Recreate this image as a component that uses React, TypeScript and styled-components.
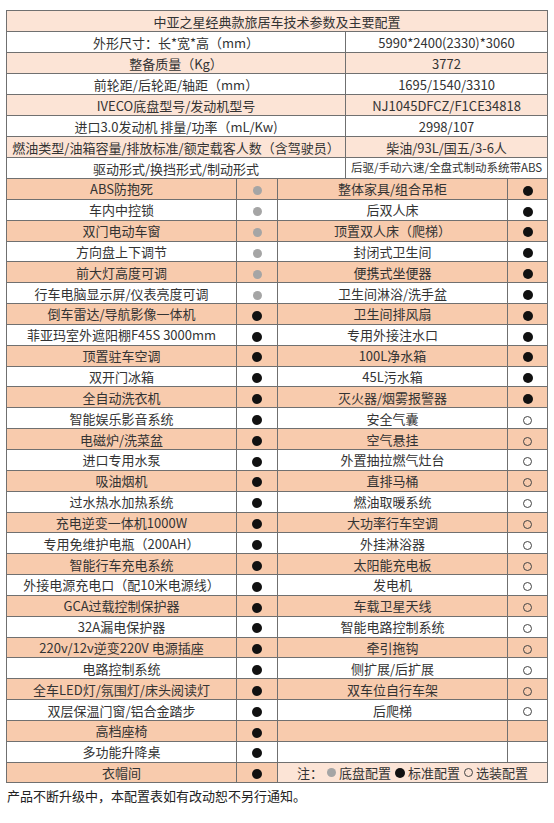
import styled, { createGlobalStyle } from "styled-components";

type Mark = "base" | "std" | "opt";
type Tone = "peach" | "salmon" | "white";

const GlobalStyle = createGlobalStyle`
  html, body {
    margin: 0;
    padding: 0;
    background: #fff;
  }
  body {
    font-family: "Noto Sans CJK SC", "Noto Sans", sans-serif;
    color: #333;
  }
`;

const Page = styled.div`
  width: 554px;
  height: 823px;
  box-sizing: border-box;
  padding: 10px 0 0 6px;
`;

const Sheet = styled.table`
  width: 541px;
  border-collapse: collapse;
  table-layout: fixed;
  border: 1px solid #555;
`;

const Row = styled.tr<{ $h: number }>`
  height: ${(p) => p.$h}px;
`;

const tones: Record<Tone, string> = {
  peach: "#fce4d6",
  salmon: "#f8cbad",
  white: "#ffffff",
};

const Cell = styled.td<{ $tone: Tone; $size?: number }>`
  padding: 0;
  border: 1px solid #707070;
  background: ${(p) => tones[p.$tone]};
  text-align: center;
  vertical-align: middle;
  font-size: ${(p) => p.$size ?? 13}px;
  line-height: 1;
  white-space: nowrap;
  overflow: hidden;
  color: #333;
`;

const Dot = styled.span<{ $mark: Mark }>`
  display: inline-block;
  box-sizing: border-box;
  width: ${(p) => (p.$mark === "std" ? 10 : 9)}px;
  height: ${(p) => (p.$mark === "std" ? 10 : 9)}px;
  border-radius: 50%;
  vertical-align: middle;
  background: ${(p) =>
    p.$mark === "base" ? "#a5a5a5" : p.$mark === "std" ? "#111" : "transparent"};
  border: ${(p) => (p.$mark === "opt" ? "1.3px solid #444" : "none")};
`;

const Legend = styled.span`
  display: inline-flex;
  align-items: center;
  gap: 2px;
  font-size: 13px;
  & > ${Dot} {
    margin: 0 1px 0 2px;
  }
`;

const Footnote = styled.p`
  margin: 6px 0 0 1px;
  font-size: 13px;
  line-height: 14px;
  color: #222;
`;

// label, value, row tone, optional smaller size for the value
const specs: [string, string, Tone, number?][] = [
  ["外形尺寸：长*宽*高（mm）", "5990*2400(2330)*3060", "white"],
  ["整备质量（Kg）", "3772", "peach"],
  ["前轮距/后轮距/轴距（mm）", "1695/1540/3310", "white"],
  ["IVECO底盘型号/发动机型号", "NJ1045DFCZ/F1CE34818", "peach"],
  ["进口3.0发动机 排量/功率（mL/Kw)", "2998/107", "white"],
  ["燃油类型/油箱容量/排放标准/额定载客人数（含驾驶员）", "柴油/93L/国五/3-6人", "peach"],
  ["驱动形式/换挡形式/制动形式", "后驱/手动六速/全盘式制动系统带ABS", "white", 11.5],
];

const leftItems: [string, Mark][] = [
  ["ABS防抱死", "base"],
  ["车内中控锁", "base"],
  ["双门电动车窗", "base"],
  ["方向盘上下调节", "base"],
  ["前大灯高度可调", "base"],
  ["行车电脑显示屏/仪表亮度可调", "base"],
  ["倒车雷达/导航影像一体机", "std"],
  ["菲亚玛室外遮阳棚F45S 3000mm", "std"],
  ["顶置驻车空调", "std"],
  ["双开门冰箱", "std"],
  ["全自动洗衣机", "std"],
  ["智能娱乐影音系统", "std"],
  ["电磁炉/洗菜盆", "std"],
  ["进口专用水泵", "std"],
  ["吸油烟机", "std"],
  ["过水热水加热系统", "std"],
  ["充电逆变一体机1000W", "std"],
  ["专用免维护电瓶（200AH）", "std"],
  ["智能行车充电系统", "std"],
  ["外接电源充电口（配10米电源线）", "std"],
  ["GCA过载控制保护器", "std"],
  ["32A漏电保护器", "std"],
  ["220v/12v逆变220V 电源插座", "std"],
  ["电路控制系统", "std"],
  ["全车LED灯/氛围灯/床头阅读灯", "std"],
  ["双层保温门窗/铝合金踏步", "std"],
  ["高档座椅", "std"],
  ["多功能升降桌", "std"],
  ["衣帽间", "std"],
];

const rightItems: ([string, Mark] | null)[] = [
  ["整体家具/组合吊柜", "std"],
  ["后双人床", "std"],
  ["顶置双人床（爬梯）", "std"],
  ["封闭式卫生间", "std"],
  ["便携式坐便器", "std"],
  ["卫生间淋浴/洗手盆", "std"],
  ["卫生间排风扇", "std"],
  ["专用外接注水口", "std"],
  ["100L净水箱", "std"],
  ["45L污水箱", "std"],
  ["灭火器/烟雾报警器", "std"],
  ["安全气囊", "opt"],
  ["空气悬挂", "opt"],
  ["外置抽拉燃气灶台", "opt"],
  ["直排马桶", "opt"],
  ["燃油取暖系统", "opt"],
  ["大功率行车空调", "opt"],
  ["外挂淋浴器", "opt"],
  ["太阳能充电板", "opt"],
  ["发电机", "opt"],
  ["车载卫星天线", "opt"],
  ["智能电路控制系统", "opt"],
  ["牵引拖钩", "opt"],
  ["侧扩展/后扩展", "opt"],
  ["双车位自行车架", "opt"],
  ["后爬梯", "opt"],
  null,
  null,
];

export default function App() {
  return (
    <>
      <GlobalStyle />
      <Page>
        <Sheet>
          <colgroup>
            <col style={{ width: 230 }} />
            <col style={{ width: 41 }} />
            <col style={{ width: 68 }} />
            <col style={{ width: 162 }} />
            <col style={{ width: 40 }} />
          </colgroup>
          <tbody>
            <Row $h={21}>
              <Cell $tone="peach" colSpan={5}>
                中亚之星经典款旅居车技术参数及主要配置
              </Cell>
            </Row>
            {specs.map(([label, value, tone, size]) => (
              <Row $h={21} key={label}>
                <Cell $tone={tone} colSpan={3}>
                  {label}
                </Cell>
                <Cell $tone={tone} colSpan={2} $size={size}>
                  {value}
                </Cell>
              </Row>
            ))}
            {leftItems.map(([name, mark], i) => {
              const tone: Tone = i % 2 === 0 ? "salmon" : "white";
              const right = rightItems[i];
              const last = i === leftItems.length - 1;
              return (
                <Row $h={20.85} key={name}>
                  <Cell $tone={tone}>{name}</Cell>
                  <Cell $tone={tone}>
                    <Dot $mark={mark} />
                  </Cell>
                  {last ? (
                    <Cell $tone="peach" colSpan={3}>
                      <Legend>
                        注：<Dot $mark="base" />底盘配置<Dot $mark="std" />标准配置
                        <Dot $mark="opt" />选装配置
                      </Legend>
                    </Cell>
                  ) : (
                    <>
                      <Cell $tone={tone} colSpan={2}>
                        {right ? right[0] : ""}
                      </Cell>
                      <Cell $tone={tone}>{right ? <Dot $mark={right[1]} /> : null}</Cell>
                    </>
                  )}
                </Row>
              );
            })}
          </tbody>
        </Sheet>
        <Footnote>产品不断升级中，本配置表如有改动恕不另行通知。</Footnote>
      </Page>
    </>
  );
}
